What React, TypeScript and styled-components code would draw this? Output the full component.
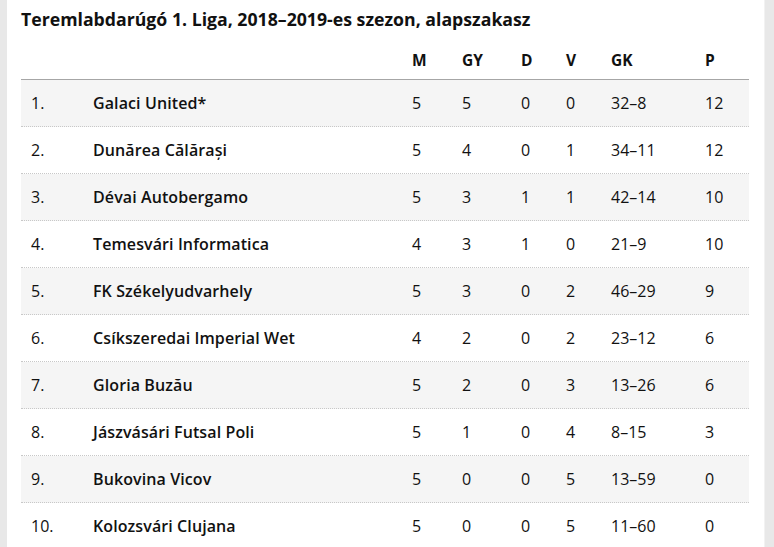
import React from "react";
import styled, { createGlobalStyle } from "styled-components";

const Global = createGlobalStyle`
  html, body { margin: 0; padding: 0; background: #e8e8e8; }
  body { font-family: "Open Sans", "Noto Sans", sans-serif; color: #111; }
`;

const Page = styled.div`
  margin: 0 9px 0 7px;
  background: #ffffff;
  min-height: 547px;
  padding: 7px 15px 0 14px;
  border-right: 1px solid #f2f2f2;
  box-sizing: border-box;
`;

const Title = styled.h2`
  margin: 0 0 10px 0;
  font-size: 17.7px;
  line-height: 24px;
  font-weight: 700;
  color: #111;
`;

const cols = "62px 319px 50px 59px 45px 45px 94px 55px";

const HeaderRow = styled.div`
  display: grid;
  grid-template-columns: ${cols};
  height: 38px;
  align-items: center;
  border-bottom: 1px solid #a6a6a6;
  font-weight: 700;
  font-size: 15.5px;
`;

const Row = styled.div<{ $alt: boolean }>`
  display: grid;
  grid-template-columns: ${cols};
  height: 46px;
  align-items: center;
  background: ${(p) => (p.$alt ? "#f5f5f5" : "#ffffff")};
  border-bottom: 1px dotted #c8c8c8;
  font-size: 16px;
  font-weight: 400;
`;

const Cell = styled.div`
  padding-left: 10px;
  white-space: nowrap;
`;

const TeamCell = styled(Cell)`
  font-weight: 600;
  letter-spacing: 0.1px;
`;

const rows: [string, string, number, number, number, number, string, number][] = [
  ["1.", "Galaci United*", 5, 5, 0, 0, "32–8", 12],
  ["2.", "Dunărea Călărași", 5, 4, 0, 1, "34–11", 12],
  ["3.", "Dévai Autobergamo", 5, 3, 1, 1, "42–14", 10],
  ["4.", "Temesvári Informatica", 4, 3, 1, 0, "21–9", 10],
  ["5.", "FK Székelyudvarhely", 5, 3, 0, 2, "46–29", 9],
  ["6.", "Csíkszeredai Imperial Wet", 4, 2, 0, 2, "23–12", 6],
  ["7.", "Gloria Buzău", 5, 2, 0, 3, "13–26", 6],
  ["8.", "Jászvásári Futsal Poli", 5, 1, 0, 4, "8–15", 3],
  ["9.", "Bukovina Vicov", 5, 0, 0, 5, "13–59", 0],
  ["10.", "Kolozsvári Clujana", 5, 0, 0, 5, "11–60", 0],
];

export default function App() {
  return (
    <>
      <Global />
      <Page>
        <Title>Teremlabdarúgó 1. Liga, 2018–2019-es szezon, alapszakasz</Title>
        <HeaderRow>
          <Cell />
          <Cell />
          <Cell>M</Cell>
          <Cell>GY</Cell>
          <Cell>D</Cell>
          <Cell>V</Cell>
          <Cell>GK</Cell>
          <Cell>P</Cell>
        </HeaderRow>
        {rows.map((r, i) => (
          <Row key={i} $alt={i % 2 === 0}>
            <Cell>{r[0]}</Cell>
            <TeamCell>{r[1]}</TeamCell>
            <Cell>{r[2]}</Cell>
            <Cell>{r[3]}</Cell>
            <Cell>{r[4]}</Cell>
            <Cell>{r[5]}</Cell>
            <Cell>{r[6]}</Cell>
            <Cell>{r[7]}</Cell>
          </Row>
        ))}
      </Page>
    </>
  );
}
